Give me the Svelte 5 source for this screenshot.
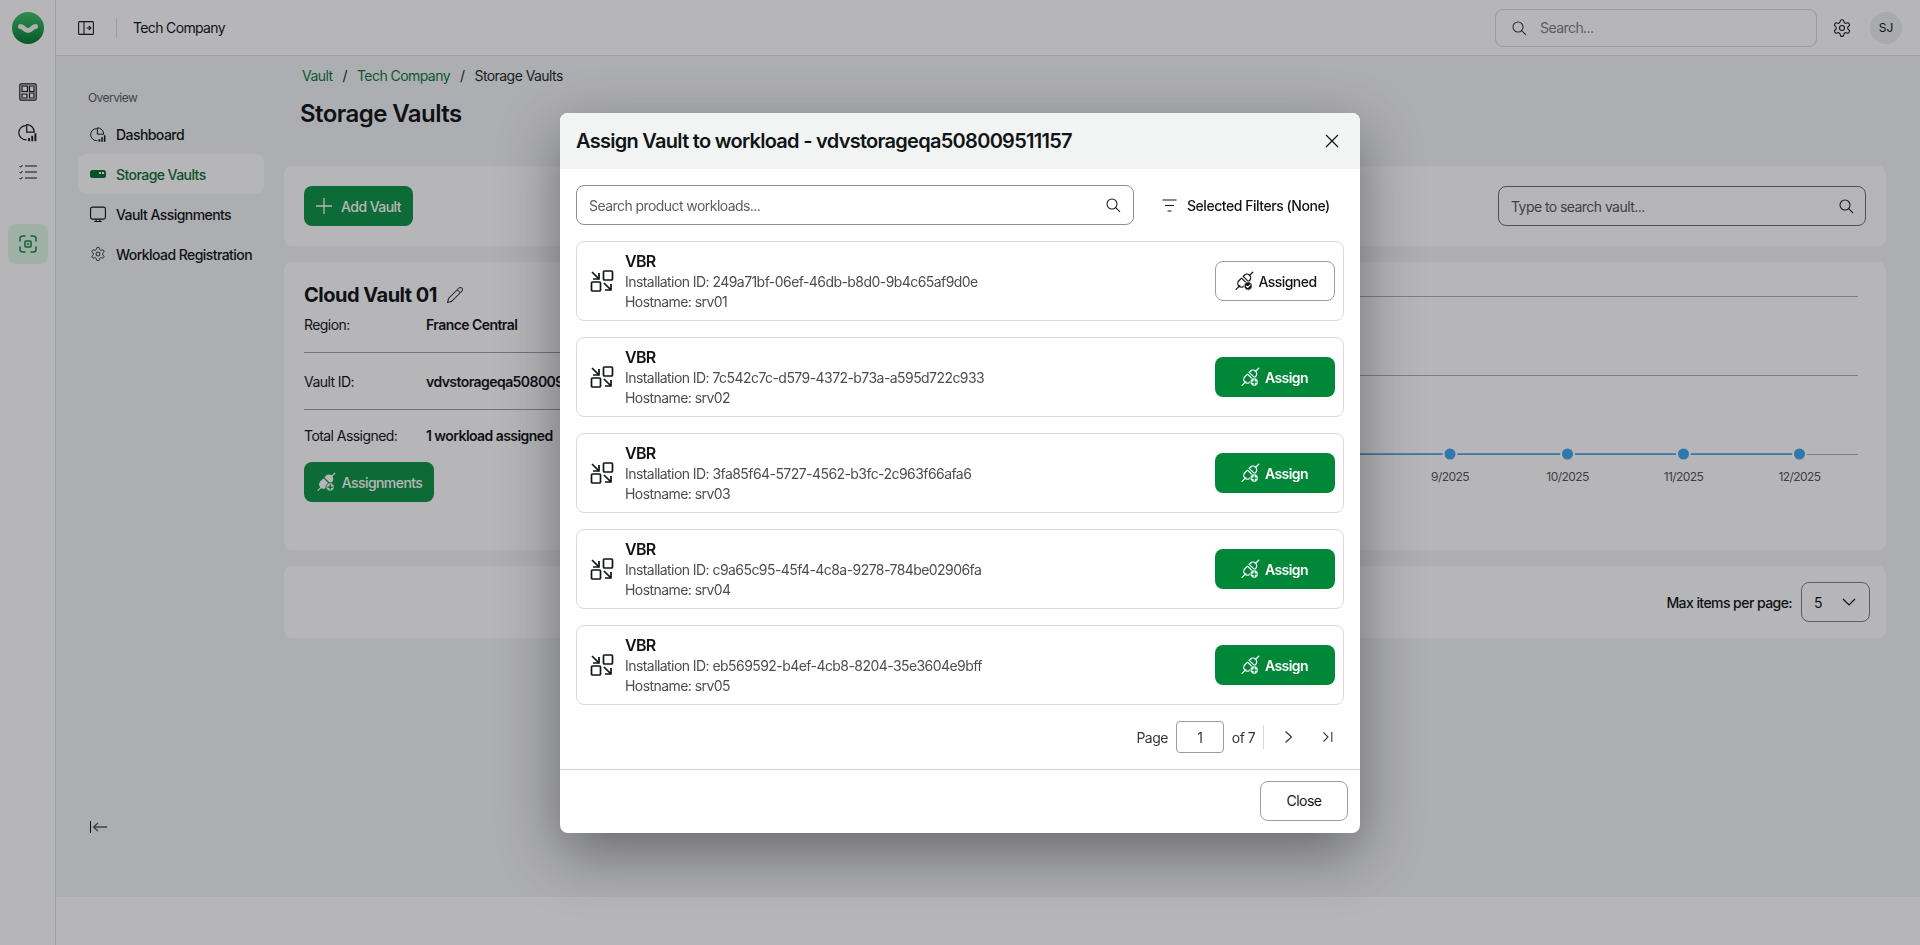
<script>
  const gear = "M12.22 2h-.44a2 2 0 0 0-2 2v.18a2 2 0 0 1-1 1.73l-.43.25a2 2 0 0 1-2 0l-.15-.08a2 2 0 0 0-2.73.73l-.22.38a2 2 0 0 0 .73 2.73l.15.1a2 2 0 0 1 1 1.72v.51a2 2 0 0 1-1 1.74l-.15.09a2 2 0 0 0-.73 2.73l.22.38a2 2 0 0 0 2.73.73l.15-.08a2 2 0 0 1 2 0l.43.25a2 2 0 0 1 1 1.73V20a2 2 0 0 0 2 2h.44a2 2 0 0 0 2-2v-.18a2 2 0 0 1 1-1.73l.43-.25a2 2 0 0 1 2 0l.15.08a2 2 0 0 0 2.73-.73l.22-.39a2 2 0 0 0-.73-2.73l-.15-.08a2 2 0 0 1-1-1.74v-.5a2 2 0 0 1 1-1.74l.15-.09a2 2 0 0 0 .73-2.73l-.22-.38a2 2 0 0 0-2.73-.73l-.15.08a2 2 0 0 1-2 0l-.43-.25a2 2 0 0 1-1-1.73V4a2 2 0 0 0-2-2z";
  const rows = [
    { id: "249a71bf-06ef-46db-b8d0-9b4c65af9d0e", host: "srv01", assigned: true },
    { id: "7c542c7c-d579-4372-b73a-a595d722c933", host: "srv02" },
    { id: "3fa85f64-5727-4562-b3fc-2c963f66afa6", host: "srv03" },
    { id: "c9a65c95-45f4-4c8a-9278-784be02906fa", host: "srv04" },
    { id: "eb569592-b4ef-4cb8-8204-35e3604e9bff", host: "srv05" }
  ];
  const points = [
    { x: 510, label: "8/2025" },
    { x: 626, label: "9/2025" },
    { x: 743.5, label: "10/2025" },
    { x: 859.5, label: "11/2025" },
    { x: 975.5, label: "12/2025" }
  ];
</script>

{#snippet search(size)}
  <svg width={size} height={size} viewBox="0 0 24 24" fill="none" stroke="currentColor" stroke-width="1.6" stroke-linecap="round"><circle cx="10.5" cy="10.5" r="7.5"/><path d="m16 16 6 6"/></svg>
{/snippet}

{#snippet pie(size)}
  <svg width={size} height={size} viewBox="0 0 24 24" fill="none" stroke="currentColor" stroke-width="1.5"><path d="M10 3.2a9 9 0 1 0 0 18h1"/><path d="M11 2a9.5 9.5 0 0 1 9.5 9.5H11z"/><path d="M14 23v-4M18 23v-7M22 23v-10" stroke-width="2.4"/></svg>
{/snippet}

{#snippet plug(variant)}
  <svg width="20" height="20" viewBox="0 0 24 24" fill={variant === "solid" ? "currentColor" : "none"} stroke="currentColor" stroke-width="1.5" stroke-linecap="round" stroke-linejoin="round">
    <path d="M2.5 22 7 17.5" fill="none"/>
    <path d="M9 8.5 5.8 11.7a4.4 4.4 0 0 0 6.3 6.3l3.2-3.2z"/>
    <path d="M11 6.5l1.4-1.4a4.4 4.4 0 0 1 6.3 6.3L17.4 12.7z"/>
    <path d="M19 5l3.5-3.5" fill="none"/>
    {#if variant === "check"}
      <circle cx="17" cy="18" r="5" fill="currentColor" stroke="#fff" stroke-width="1"/>
      <path d="m14.8 18 1.6 1.6 2.9-3" stroke="#fff" stroke-width="1.4" fill="none"/>
    {:else}
      <circle cx="17" cy="18" r="5" fill="#fff" stroke="#008737" stroke-width="1"/>
      <path d="M17 15.4v5.2M14.4 18h5.2" stroke="#008737" stroke-width="1.5" fill="none"/>
    {/if}
  </svg>
{/snippet}

<div class="app">
  <aside class="rail">
    <div class="logo">
      <svg width="32" height="32" viewBox="0 0 32 32"><defs><linearGradient id="lg" x1="0" y1="0" x2="0" y2="1"><stop offset="0" stop-color="#3fc56a"/><stop offset="1" stop-color="#047a33"/></linearGradient></defs><circle cx="16" cy="16" r="16" fill="url(#lg)"/><path d="M8.500 14.500 C11 14.500 13 18.500 16 18.500 S21 14.500 23.500 14.500" fill="none" stroke="#f2f5f3" stroke-width="5" stroke-linecap="round"/></svg>
    </div>
    <nav class="rail-nav">
      <span class="rail-ico">
        <svg width="18" height="18" viewBox="0 0 18 18" fill="none" stroke="currentColor" stroke-width="1.2"><rect x=".8" y=".8" width="16.400" height="16.400" rx="1.500"/><rect x="3" y="3" width="5.500" height="5.500"/><path d="M10.500 3H15v5.500h-4.500zM3 11h5v4H3zM10.500 10H15v5h-4.500z"/></svg>
      </span>
      <span class="rail-ico">{@render pie(19)}</span>
      <span class="rail-ico">
        <svg width="18" height="16" viewBox="0 0 18 16" fill="none" stroke="currentColor" stroke-width="1.200"><path d="M6 2h12M6 8h12M6 14h12"/><path d="m.5 2 1.200 1.200L3.500 1M.5 8l1.200 1.200L3.500 7M.5 14l1.200 1.200L3.500 13" stroke-width="1"/></svg>
      </span>
      <span class="rail-ico active">
        <svg width="18" height="18" viewBox="0 0 18 18" fill="none" stroke="currentColor" stroke-width="1.500" stroke-linecap="round"><path d="M1 6V3.500A2.500 2.500 0 0 1 3.500 1H6M12 1h2.500A2.500 2.500 0 0 1 17 3.500V6M17 12v2.500a2.500 2.500 0 0 1-2.500 2.500H12M6 17H3.500A2.500 2.500 0 0 1 1 14.500V12"/><rect x="6" y="6" width="6" height="6" rx="1"/><circle cx="9" cy="9" r="1" fill="currentColor" stroke="none"/></svg>
      </span>
    </nav>
  </aside>

  <div class="main">
    <header class="topbar">
      <svg class="toggle" width="16" height="14" viewBox="0 0 16 14" fill="none" stroke="currentColor" stroke-width="1.100"><rect x=".6" y=".6" width="14.800" height="12.800" rx="1"/><path d="M6 .6v12.800M8.500 7h4M10.800 5l2 2-2 2"/></svg>
      <span class="tdiv"></span>
      <span class="company">Tech Company</span>
      <div class="gsearch">
        <span class="gs-ico">{@render search(16)}</span>
        <span>Search...</span>
      </div>
      <svg class="tgear" width="20" height="20" viewBox="0 0 24 24" fill="none" stroke="currentColor" stroke-width="1.300"><path d={gear}/><circle cx="12" cy="12" r="3"/></svg>
      <span class="avatar">SJ</span>
    </header>

    <div class="body">
      <aside class="side">
        <div class="side-label">Overview</div>
        <ul class="side-nav">
          <li>
            <span class="si">{@render pie(19)}</span>Dashboard
          </li>
          <li class="on">
            <span class="si"><svg width="16" height="8" viewBox="0 0 16 8"><rect width="16" height="8" rx="2.500" fill="currentColor"/><rect x="9" y="2" width="2" height="2" fill="#fff"/><rect x="12" y="2" width="2" height="2" fill="#fff"/></svg></span>Storage Vaults
          </li>
          <li>
            <span class="si"><svg width="17" height="17" viewBox="0 0 17 17" fill="none" stroke="currentColor" stroke-width="1.200"><rect x=".6" y=".6" width="15.800" height="12.800" rx="2"/><path d="M6.500 13.500v2.500M10.500 13.500v2.500M4.500 16h8"/></svg></span>Vault Assignments
          </li>
          <li>
            <span class="si"><svg width="20" height="20" viewBox="0 0 24 24" fill="none" stroke="currentColor" stroke-width="1.300"><path d={gear}/><circle cx="12" cy="12" r="3"/></svg></span>Workload Registration
          </li>
        </ul>
        <div class="collapse">
          <svg width="17" height="12" viewBox="0 0 17 12" fill="none" stroke="currentColor" stroke-width="1"><path d="M.5 0v12" stroke="#111"/><path d="M17 6H4M8 2 3.500 6 8 10" stroke-width="1.300"/></svg>
        </div>
      </aside>

      <main class="page">
        <div class="crumbs">
          <span class="link">Vault</span><span class="sep">/</span><span class="link">Tech Company</span><span class="sep">/</span><span>Storage Vaults</span>
        </div>
        <h1>Storage Vaults</h1>

        <section class="panel toolbar">
          <button class="btn primary add">
            <svg width="16" height="16" viewBox="0 0 16 16" fill="none" stroke="currentColor" stroke-width="1.300"><path d="M8 0v16M0 8h16"/></svg>
            Add Vault
          </button>
          <div class="vsearch"><span>Type to search vault...</span>{@render search(16)}</div>
        </section>

        <section class="panel vault">
          <div class="info">
            <h2>Cloud Vault 01
              <svg width="18" height="18" viewBox="0 0 24 24" fill="none" stroke="currentColor" stroke-width="1.400" stroke-linejoin="round"><path d="M17 3a2.850 2.830 0 1 1 4 4L7.500 20.500 2 22l1.500-5.500Z"/><path d="m15 5 4 4"/></svg>
            </h2>
            <div class="kv kv-first"><span>Region:</span><b>France Central</b></div>
            <div class="kv"><span>Vault ID:</span><b>vdvstorageqa508009511157</b></div>
            <div class="kv kv-last"><span>Total Assigned:</span><b>1 workload assigned</b></div>
            <button class="btn primary assigns">{@render plug("solid")}Assignments</button>
          </div>
          <svg class="chart" width="1034" height="240" viewBox="0 0 1034 240">
            <path d="M0 34.500H1034M0 113.500H1034M0 192.500H1034" stroke="#8f9093" stroke-width="1" opacity=".7"/>
            <path d={`M0 192H${points[4].x}`} stroke="#3da6ef" stroke-width="1.500"/>
            {#each points as p}
              <circle cx={p.x} cy="192" r="6.500" fill="#3da6ef" stroke="#fff" stroke-width="2"/>
              <text x={p.x} y="219" text-anchor="middle">{p.label}</text>
            {/each}
          </svg>
        </section>

        <section class="panel pager">
          <span>Max items per page:</span>
          <div class="select"><span>5</span>
            <svg width="14" height="8" viewBox="0 0 14 8" fill="none" stroke="currentColor" stroke-width="1.200"><path d="m1 1 6 6 6-6"/></svg>
          </div>
        </section>
      </main>
    </div>
    <footer class="foot"></footer>
  </div>

  <div class="overlay"></div>

  <div class="modal" role="dialog">
    <header class="m-head">
      <h3>Assign Vault to workload - vdvstorageqa508009511157</h3>
      <svg width="14" height="14" viewBox="0 0 14 14" fill="none" stroke="currentColor" stroke-width="1.200"><path d="m1 1 12 12M13 1 1 13"/></svg>
    </header>
    <div class="m-body">
      <div class="m-tools">
        <div class="m-search"><span>Search product workloads...</span>{@render search(16)}</div>
        <div class="m-filter">
          <svg width="15" height="13" viewBox="0 0 15 13" fill="none" stroke="currentColor" stroke-width="1.200"><path d="M.5 1h14M3 6.500h9M5.500 12h4"/></svg>
          Selected Filters (None)
        </div>
      </div>
      <div class="m-list">
        {#each rows as r}
          <article class="m-row">
            <svg class="wl" width="24" height="24" viewBox="0 0 24 24" fill="none" stroke="currentColor" stroke-width="1.700"><rect x="13.500" y="2" width="9" height="9" rx="1"/><rect x="1.500" y="13" width="9" height="9" rx="1"/><path d="M2 3l7 7M9 4v6H3M14 14l7 7M21 15v6h-6"/></svg>
            <div class="m-text">
              <strong>VBR</strong>
              <span>Installation ID: {r.id}</span>
              <span>Hostname: {r.host}</span>
            </div>
            {#if r.assigned}
              <button class="btn ghost act">{@render plug("check")}Assigned</button>
            {:else}
              <button class="btn green act">{@render plug("add")}Assign</button>
            {/if}
          </article>
        {/each}
      </div>
      <div class="m-pager">
        <span>Page</span>
        <span class="pg">1</span>
        <span>of 7</span>
        <span class="pdiv"></span>
        <svg class="next" width="9" height="14" viewBox="0 0 9 14" fill="none" stroke="currentColor" stroke-width="1.200"><path d="m1.500 1.500 6 5.500-6 5.500"/></svg>
        <svg class="end" width="10" height="10" viewBox="0 0 10 10" fill="none" stroke="currentColor" stroke-width="1.100"><path d="m.5.500 4.500 4.500-4.500 4.500M8.800 0v10"/></svg>
      </div>
    </div>
    <footer class="m-foot"><button class="btn ghost close">Close</button></footer>
  </div>
</div>

<style>
  :global(body) { margin: 0; font-family: Inter, "Liberation Sans", sans-serif; font-size: 14px; letter-spacing: -0.56px; color: #111417; background: #f3f4f5; }
  * { box-sizing: border-box; }
  h1, h2, h3, ul { margin: 0; padding: 0; }
  button { font: inherit; letter-spacing: inherit; }
  .app { display: flex; height: 945px; overflow: hidden; }

  .rail { width: 56px; flex: none; background: #fff; border-right: 1px solid #dcdee0; display: flex; flex-direction: column; align-items: center; }
  .logo { height: 56px; display: flex; align-items: center; justify-content: center; }
  .rail-nav { display: flex; flex-direction: column; align-items: center; margin-top: 16px; }
  .rail-ico { width: 40px; height: 40px; display: flex; align-items: center; justify-content: center; color: #17191c; border-radius: 8px; }
  .rail-ico.active { margin-top: 32px; background: #def7e6; color: #0a8a3c; }

  .main { flex: 1; min-width: 0; display: flex; flex-direction: column; }
  .topbar { height: 56px; flex: none; background: #fff; border-bottom: 1px solid #dcdee0; display: flex; align-items: center; padding-left: 22px; }
  .toggle { color: #17191c; }
  .tdiv { width: 1px; height: 20px; background: #d5d7d9; margin: 0 16px 0 22px; }
  .company { font-size: 14px; letter-spacing: -0.65px; }
  .gsearch { margin-left: auto; width: 322px; height: 38px; border: 1px solid #d5d7d9; border-radius: 8px; display: flex; align-items: center; padding-left: 15px; gap: 13px; color: #7a7e84; }
  .gs-ico { display: flex; color: #33373b; }
  .tgear { margin-left: 15px; color: #17191c; }
  .avatar { margin: 0 18px 0 18px; width: 32px; height: 32px; border-radius: 50%; background: #eceef0; display: flex; align-items: center; justify-content: center; font-size: 12px; letter-spacing: 0; }

  .body { flex: 1; min-height: 0; display: flex; }
  .side { width: 228px; flex: none; display: flex; flex-direction: column; padding: 34px 20px 0 22px; }
  .side-label { font-size: 12px; line-height: 16px; color: #555a60; padding-left: 10px; }
  .side-nav { list-style: none; margin-top: 8px; }
  .side-nav li { height: 40px; display: flex; align-items: center; padding-left: 12px; gap: 10px; font-weight: 500; border-radius: 8px; }
  .side-nav li.on { background: #fff; color: #0a6e33; }
  .si { width: 16px; display: flex; justify-content: center; }
  .collapse { margin-top: auto; height: 12px; margin-bottom: 64px; padding-left: 12px; color: #55585c; display: flex; }

  .page { flex: 1; min-width: 0; padding-right: 34px; display: flex; flex-direction: column; }
  .crumbs { margin: 10px 0 0 18px; height: 20px; line-height: 20px; display: flex; white-space: nowrap; color: #24282c; }
  .link { color: #0a7a3a; }
  .sep { margin: 0 10px; }
  h1 { margin: 14px 0 0 16px; font-size: 24px; line-height: 28px; font-weight: 600; }

  .panel { background: #fff; border-radius: 8px; }
  .toolbar { margin-top: 38px; height: 80px; flex: none; display: flex; align-items: center; justify-content: space-between; padding: 0 20px; }
  .btn { display: inline-flex; align-items: center; justify-content: center; height: 40px; border-radius: 8px; border: 0; font-weight: 500; cursor: pointer; }
  .primary { background: #0d9447; color: #fff; }
  .add { width: 109px; gap: 9px; }
  .vsearch { width: 368px; height: 40px; border: 1px solid #6d6f72; border-radius: 8px; display: flex; align-items: center; justify-content: space-between; padding: 0 11px 0 12px; color: #53565a; }
  .vsearch :global(svg) { color: #17191c; }

  .vault { margin-top: 16px; height: 288px; flex: none; display: flex; justify-content: space-between; padding: 0 28px 0 20px; overflow: hidden; }
  .info { width: 500px; flex: none; padding-top: 20px; }
  h2 { font-size: 20px; line-height: 26px; font-weight: 700; letter-spacing: -0.5px; display: flex; align-items: center; gap: 9px; }
  h2 svg { color: #33363a; }
  .kv { display: flex; border-bottom: 1px solid #9fa1a4; height: 57px; padding-top: 19px; line-height: 20px; }
  .kv-first { height: 38px; padding-top: 0; margin-top: 7px; }
  .kv-last { border: 0; height: 52px; padding-top: 16px; }
  .kv span { width: 122px; }
  .kv b { font-weight: 600; white-space: nowrap; }
  .assigns { width: 130px; gap: 6px; }
  .chart { flex: none; }
  .chart text { font: 12px Inter, sans-serif; fill: #53565a; }

  .pager { margin-top: 16px; height: 72px; flex: none; display: flex; align-items: center; justify-content: flex-end; padding-right: 16px; gap: 9px; font-weight: 500; }
  .select { width: 69px; height: 40px; border: 1px solid #7c7e81; border-radius: 8px; display: flex; align-items: center; justify-content: space-between; padding: 0 13px 0 12px; font-weight: 400; }
  .foot { height: 48px; flex: none; background: #fff; }

  .overlay { position: fixed; inset: 0; background: rgba(12, 14, 20, .3); }
  .modal { position: fixed; left: 560px; top: 113px; width: 800px; height: 720px; background: #fff; border-radius: 8px; overflow: hidden; display: flex; flex-direction: column; box-shadow: 0 20px 60px rgba(0, 0, 0, .4); }
  .m-head { height: 56px; flex: none; background: #f2f4f3; display: flex; align-items: center; justify-content: space-between; padding: 0 21px 0 16px; }
  h3 { font-size: 20px; font-weight: 600; line-height: 28px; letter-spacing: -0.72px; }
  .m-body { flex: 1; padding: 16px 16px 0; }
  .m-tools { display: flex; align-items: center; }
  .m-search { width: 558px; height: 40px; border: 1px solid #8c8f92; border-radius: 8px; display: flex; align-items: center; justify-content: space-between; padding: 0 12px; color: #5a5e63; }
  .m-search :global(svg) { color: #17191c; }
  .m-filter { margin-left: 28px; display: flex; align-items: center; gap: 10px; font-weight: 500; white-space: nowrap; letter-spacing: -0.46px; }
  .m-list { margin-top: 16px; display: flex; flex-direction: column; gap: 16px; }
  .m-row { height: 80px; border: 1px solid #d8dadc; border-radius: 8px; display: flex; align-items: center; padding: 0 8px 0 13px; }
  .wl { flex: none; }
  .m-text { margin-left: 11px; flex: 1; display: flex; flex-direction: column; line-height: 20px; color: #4a4e52; }
  .m-text strong { font-size: 16px; font-weight: 600; color: #111417; line-height: 22px; letter-spacing: -0.7px; }
  .act { width: 120px; gap: 5px; }
  .green { background: #008737; color: #fff; font-weight: 600; }
  .green :global(svg) { margin-left: -2px; }
  .ghost { background: #fff; border: 1px solid #9a9c9f; color: #111417; font-weight: 500; }
  .m-pager { margin-top: 16px; height: 32px; display: flex; align-items: center; justify-content: flex-end; color: #33373b; padding-right: 11px; }
  .pg { width: 48px; height: 32px; margin: 0 8px; border: 1px solid #9a9c9f; border-radius: 4px; display: flex; align-items: center; justify-content: center; }
  .pdiv { width: 1px; height: 24px; background: #d8dadc; margin: 0 20px 0 8px; }
  .end { margin-left: 30px; }
  .m-foot { height: 64px; flex: none; border-top: 1px solid #d0d2d4; display: flex; align-items: center; justify-content: flex-end; padding: 0 12px 2px 0; }
  .close { width: 88px; height: 40px; font-weight: 400; }
</style>
